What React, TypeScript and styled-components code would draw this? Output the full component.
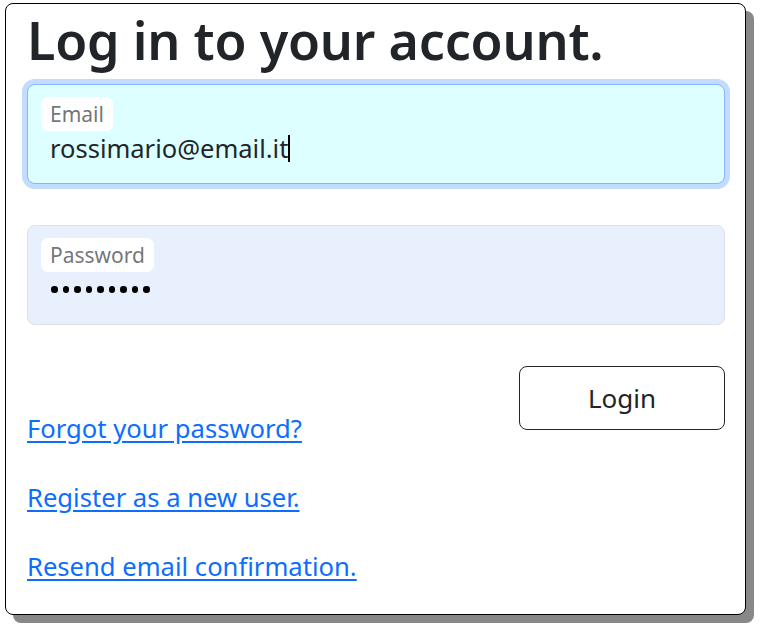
import React from 'react';
import styled, { createGlobalStyle } from 'styled-components';

const GlobalStyle = createGlobalStyle`
  html, body {
    margin: 0;
    background: #fff;
  }
  body {
    min-height: 100vh;
    font-family: 'Noto Sans', 'Open Sans', sans-serif;
    color: #212529;
  }
`;

const Page = styled.div`
  min-height: 625px;
  padding: 3px 0 0 5px;
  box-sizing: border-box;
`;

const Card = styled.main`
  box-sizing: border-box;
  width: 741px;
  height: 612px;
  padding: 0 20px 0 21px;
  border: 1px solid #000;
  border-radius: 8px;
  background: #fff;
  box-shadow: 8px 8px 0 #888;
  display: flex;
  flex-direction: column;
`;

const Title = styled.h1`
  margin: 4px 0 0;
  font-size: 52px;
  font-weight: 600;
  line-height: 64px;
  letter-spacing: -0.2px;
  color: #212529;
`;

interface FieldProps {
  $focused?: boolean;
  $autofill?: string;
}

const Field = styled.div<FieldProps>`
  box-sizing: border-box;
  height: 100px;
  margin-top: ${({ $focused }) => ($focused ? '12px' : '41px')};
  padding: 12px 13px 0;
  border: 1px solid ${({ $focused }) => ($focused ? '#86b7fe' : '#dee2e6')};
  border-radius: 8px;
  background: ${({ $autofill }) => $autofill || '#fff'};
  box-shadow: ${({ $focused }) =>
    $focused ? '0 0 0 5px #c2dbfe' : 'none'};
  display: flex;
  flex-direction: column;
  align-items: flex-start;
`;

const FieldLabel = styled.label`
  padding: 0 9px;
  height: 34px;
  line-height: 34px;
  border-radius: 7px;
  background: #fff;
  font-size: 21px;
  color: rgba(33, 37, 41, 0.65);
`;

const FieldValue = styled.div`
  padding-left: 9px;
  font-size: 25.5px;
  line-height: 34px;
  color: #212529;
  display: flex;
  align-items: center;
`;

const Caret = styled.span`
  display: inline-block;
  width: 2px;
  height: 27px;
  background: #000;
`;

const Dots = styled.div`
  margin-top: 14px;
  padding-left: 10px;
  display: flex;
  gap: 5px;
`;

const Dot = styled.span`
  width: 6.5px;
  height: 6.5px;
  border-radius: 50%;
  background: #000;
`;

const Actions = styled.div`
  margin-top: 41px;
  display: flex;
  justify-content: space-between;
  align-items: flex-start;
`;

const LinkList = styled.nav`
  padding-top: 43px;
  display: flex;
  flex-direction: column;
  align-items: flex-start;
  gap: 30px;
`;

const TextLink = styled.a`
  font-size: 25.6px;
  line-height: 39px;
  color: #0d6efd;
  text-decoration: underline;
  text-underline-offset: 3px;
`;

const LoginButton = styled.button`
  box-sizing: border-box;
  width: 206px;
  height: 64px;
  border: 1px solid #212529;
  border-radius: 8px;
  background: #fff;
  font-family: inherit;
  font-size: 26px;
  color: #212529;
  cursor: pointer;
`;

export default function App() {
  return (
    <>
      <GlobalStyle />
      <Page>
        <Card>
          <Title>Log in to your account.</Title>

          <Field $focused $autofill="#ddffff">
            <FieldLabel>Email</FieldLabel>
            <FieldValue>
              rossimario@email.it
              <Caret />
            </FieldValue>
          </Field>

          <Field $autofill="#e8f0fe">
            <FieldLabel>Password</FieldLabel>
            <Dots>
              {Array.from({ length: 9 }).map((_, i) => (
                <Dot key={i} />
              ))}
            </Dots>
          </Field>

          <Actions>
            <LinkList>
              <TextLink href="#">Forgot your password?</TextLink>
              <TextLink href="#">Register as a new user.</TextLink>
              <TextLink href="#">Resend email confirmation.</TextLink>
            </LinkList>
            <LoginButton type="button">Login</LoginButton>
          </Actions>
        </Card>
      </Page>
    </>
  );
}
